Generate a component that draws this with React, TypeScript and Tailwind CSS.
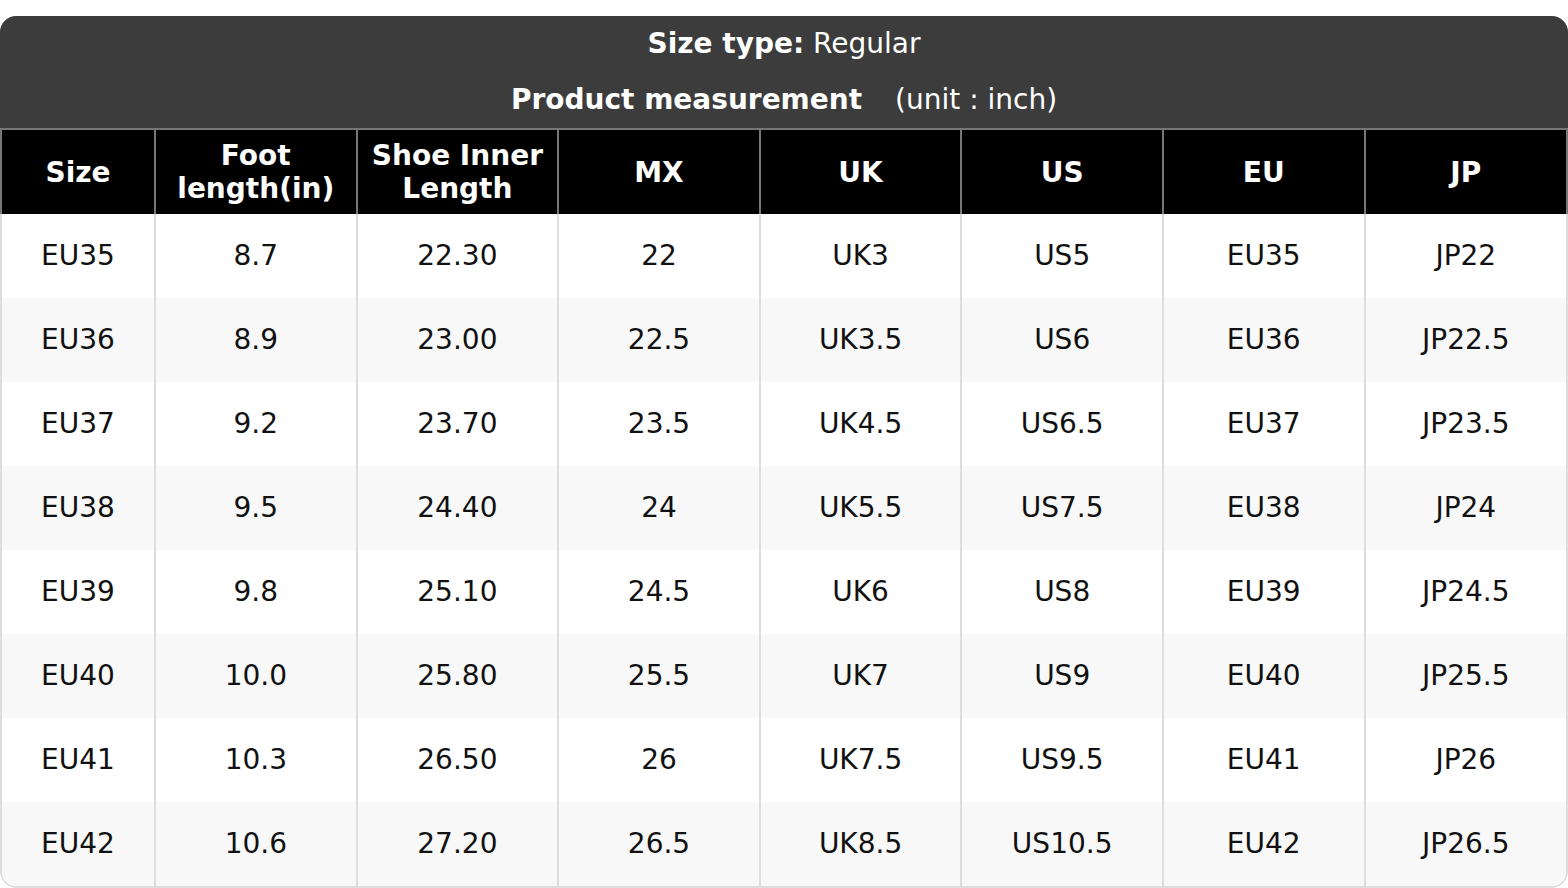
const headers = ["Size", "Foot\nlength(in)", "Shoe Inner\nLength", "MX", "UK", "US", "EU", "JP"];

const rows = [
  ["EU35", "8.7", "22.30", "22", "UK3", "US5", "EU35", "JP22"],
  ["EU36", "8.9", "23.00", "22.5", "UK3.5", "US6", "EU36", "JP22.5"],
  ["EU37", "9.2", "23.70", "23.5", "UK4.5", "US6.5", "EU37", "JP23.5"],
  ["EU38", "9.5", "24.40", "24", "UK5.5", "US7.5", "EU38", "JP24"],
  ["EU39", "9.8", "25.10", "24.5", "UK6", "US8", "EU39", "JP24.5"],
  ["EU40", "10.0", "25.80", "25.5", "UK7", "US9", "EU40", "JP25.5"],
  ["EU41", "10.3", "26.50", "26", "UK7.5", "US9.5", "EU41", "JP26"],
  ["EU42", "10.6", "27.20", "26.5", "UK8.5", "US10.5", "EU42", "JP26.5"],
];

export default function App() {
  return (
    <div className="bg-white pt-4 font-['DejaVu_Sans',sans-serif] text-[28px]">
      <div className="rounded-[16px] overflow-hidden">
        {/* Title */}
        <div className="bg-[#3c3c3c] text-white">
          <div className="h-[56px] flex items-center justify-center">
            <span className="font-bold">Size type:</span>
            <span>&nbsp;Regular</span>
          </div>
          <div className="h-[56px] flex items-center justify-center">
            <span className="font-bold">Product measurement</span>
            <span className="ml-[33px]">(unit : inch)</span>
          </div>
        </div>

        {/* Column headers */}
        <div className="grid grid-cols-[154px_repeat(6,201.6px)_1fr] bg-black border-t-2 border-[#777]">
          {headers.map((h, i) => (
            <div
              key={h}
              className={`h-[84px] flex items-center justify-center text-center text-white font-bold leading-[33px] whitespace-pre-line border-l-2 border-[#777] ${
                i === headers.length - 1 ? "border-r-2" : ""
              }`}
            >
              {h}
            </div>
          ))}
        </div>

        {/* Body */}
        <div className="border-x-2 border-b-2 border-[#ddd] rounded-b-[16px] overflow-hidden">
          {rows.map((row, r) => (
            <div
              key={row[0]}
              className={`grid grid-cols-[152px_repeat(6,201.6px)_1fr] ${
                r % 2 === 1 ? "bg-[#f8f8f8]" : "bg-white"
              }`}
            >
              {row.map((cell, i) => (
                <div
                  key={i}
                  className={`h-[84px] flex items-center justify-center text-[#111] ${
                    i > 0 ? "border-l-2 border-[#ddd]" : ""
                  }`}
                >
                  {cell}
                </div>
              ))}
            </div>
          ))}
        </div>
      </div>
    </div>
  );
}
